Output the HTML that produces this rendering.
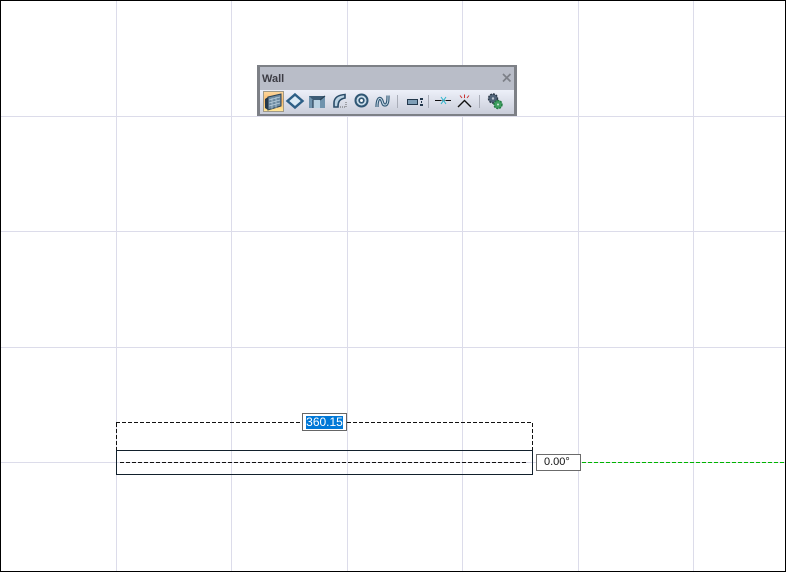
<!DOCTYPE html>
<html>
<head>
<meta charset="utf-8">
<style>
html,body{margin:0;padding:0;background:#fff;}
#c{position:relative;width:786px;height:572px;overflow:hidden;background:#fff;font-family:"Liberation Sans",sans-serif;}
svg{position:absolute;left:0;top:0;}
.box{position:absolute;box-sizing:border-box;background:#fff;border:1px solid #6b6b6b;font-size:11px;color:#111;}
</style>
</head>
<body>
<div id="c">
<svg width="786" height="572" shape-rendering="crispEdges">
<g stroke="#dcdcea" stroke-width="1">
<path d="M116.5 0V572M231.5 0V572M347.5 0V572M462.5 0V572M578.5 0V572M693.5 0V572"/>
<path d="M0 116.5H786M0 231.5H786M0 347.5H786M0 462.5H786"/>
</g>
<rect x="0.5" y="0.5" width="785" height="571" fill="none" stroke="#000"/>
<rect x="116.5" y="450.5" width="416" height="24" fill="none" stroke="#12202c"/>
<g stroke="#111" fill="none" stroke-dasharray="4 2">
<path d="M120 462.5H528"/>
<path d="M116 422.5H302"/>
<path d="M347 422.5H533"/>
<path d="M116.5 423V450"/>
<path d="M532.5 423V450"/>
</g>
<path d="M582 462.5H786" stroke="#00b400" stroke-dasharray="4 2" fill="none"/>
</svg>

<div class="box" style="left:302px;top:413px;width:45px;height:18px;border-color:#666;">
<span style="position:absolute;left:3px;top:2px;width:37px;height:13px;background:#0078d7;color:#fff;font-size:12px;line-height:13px;text-align:center;">360.15</span>
</div>
<div class="box" style="left:536px;top:454px;width:45px;height:17px;padding-left:7px;line-height:15px;">0.00°</div>

<div style="position:absolute;left:257px;top:65px;width:260px;height:51px;box-sizing:border-box;border:3px solid #7d8086;border-top-width:2px;border-bottom-width:2px;background:#b9bdc8;">
<div style="position:absolute;left:2px;top:6px;font-size:11px;font-weight:bold;color:#3c3c44;line-height:13px;">Wall</div>
<svg style="left:242px;top:6px" width="10" height="10"><path d="M1 1L8.500 8.500M8.500 1L1 8.500" stroke="#7d8088" stroke-width="1.700"/></svg>
<div style="position:absolute;left:0;top:23px;width:254px;height:24px;background:linear-gradient(#edf0f9,#c9cdd9);"></div>
<div style="position:absolute;left:3px;top:24px;width:21px;height:21px;box-sizing:border-box;border:1px solid #a09a88;background:linear-gradient(#fdd59a,#fbb968 50%,#ffe79a);"></div>
</div>

<svg width="786" height="572" style="pointer-events:none">
<!-- wall brick -->
<path d="M268 97L281 94V106L268 110Z" fill="#6d8aa0" stroke="#2c4356"/>
<path d="M265 99L268 97V110L265 108Z" fill="#24384a"/>
<path d="M269 100L280 97M269 103L280 100M269 106L280 103M272 98V109M276 97V108" stroke="#b9cedc" stroke-width=".7"/>
<!-- diamond -->
<path d="M295 94.500L302.500 101L295 107.500L287.500 101Z" fill="#dbeaf5" stroke="#2d5f86" stroke-width="2.400"/>
<!-- column -->
<path d="M309 96H325V108H309Z" fill="#6f93ad"/>
<path d="M309 96H325L320 100H313Z" fill="#3d5c76"/>
<path d="M313 100H320V108H313Z" fill="#b9d2e2"/>
<path d="M313 100V108M320 100L325 96" stroke="#2a4358" stroke-width="1.200" fill="none"/>
<!-- arc wall -->
<path d="M334 107V103C334 98 338 95 345 94.500V98C340 99 338 101 338 107Z" fill="#bcd3e3" stroke="#2a4c68" stroke-width="1.600"/>
<path d="M340 107H346V101" stroke="#666" stroke-dasharray="1 1" fill="none"/>
<!-- circle -->
<circle cx="361.500" cy="100.500" r="6" fill="#c9dce9" stroke="#2f5673" stroke-width="2"/>
<circle cx="361.500" cy="100.500" r="2.300" fill="#fff" stroke="#2f5673" stroke-width="1.700"/>
<!-- spline -->
<path d="M377 107C377 100 379 97 381 99C383 101 382 105 385 105C388 105 388 100 388 95.500" fill="none" stroke="#2f5673" stroke-width="3.200"/>
<path d="M377 107C377 100 379 97 381 99C383 101 382 105 385 105C388 105 388 100 388 95.500" fill="none" stroke="#c9dce9" stroke-width="1"/>
<!-- separators -->
<path d="M397.500 95V108M428.500 95V108M479.500 95V108" stroke="#a9adb8" shape-rendering="crispEdges"/>
<!-- rectangle with arrows -->
<rect x="407.500" y="99.500" width="10" height="5" fill="#7f9eb6" stroke="#23384c" shape-rendering="crispEdges"/>
<path d="M420 98H423V100H420ZM421 101H422V103H421ZM420 104H423V106H420Z" fill="#23384c" shape-rendering="crispEdges"/>
<!-- join -->
<path d="M435 100.500H441M446 100.500H451" stroke="#111"/>
<path d="M441 100.500H446" stroke="#777"/>
<path d="M441 97L446 104M446 97L441 104" stroke="#2ab4cc"/>
<!-- break -->
<path d="M458 107L464.500 100.500L471 107" fill="none" stroke="#111" stroke-width="1.400"/>
<path d="M464.500 94.500V98M460 95.500L462 98M469 95.500L467 98" stroke="#c83030"/>
<!-- gears -->
<circle cx="493" cy="98.500" r="4.500" fill="#4f6278" stroke="#2b3848" stroke-width="1.400" stroke-dasharray="2 1"/>
<circle cx="493" cy="98.500" r="1.200" fill="#b9c4d0"/>
<circle cx="498" cy="104.500" r="4" fill="#3fa060" stroke="#1f7a40" stroke-width="1.400" stroke-dasharray="2 1"/>
<circle cx="498" cy="104.500" r="1" fill="#d0e8d8"/>
</svg>
</div>
</body>
</html>
